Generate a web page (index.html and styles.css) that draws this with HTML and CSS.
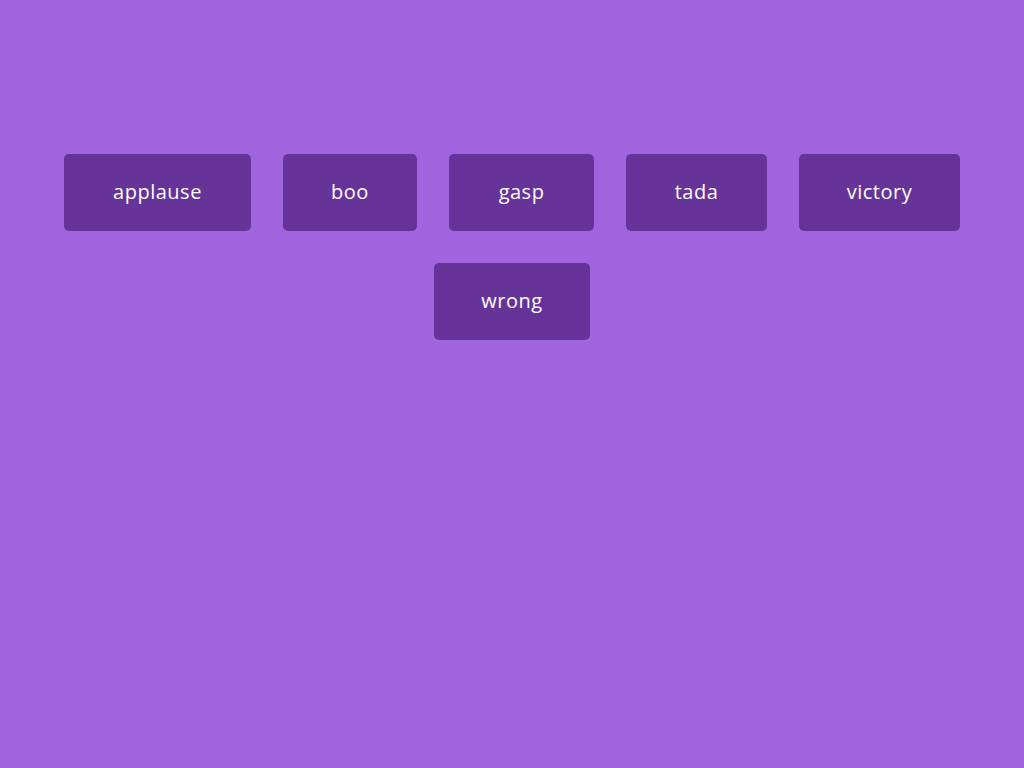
FILE: index.html
```html
<!DOCTYPE html>
<html lang="en">
<head>
<meta charset="UTF-8">
<title>Sound Board</title>
<link rel="stylesheet" href="styles.css">
</head>
<body>
<div class="board">
  <button class="btn btn-applause">applause</button>
  <button class="btn btn-boo">boo</button>
  <button class="btn btn-gasp">gasp</button>
  <button class="btn btn-tada">tada</button>
  <button class="btn btn-victory">victory</button>
  <button class="btn btn-wrong">wrong</button>
</div>
</body>
</html>
```
FILE: styles.css
```css
html, body {
  margin: 0;
  height: 100%;
}
body {
  background-color: #a164df;
  font-family: "Open Sans", "Inter", sans-serif;
  overflow: hidden;
}
.board {
  display: flex;
  flex-wrap: wrap;
  justify-content: center;
  gap: 32px;
  padding-top: 154px;
}
.btn {
  background-color: #663399;
  border: none;
  border-radius: 5px;
  color: #fff;
  height: 77px;
  padding: 0 0 2px;
  font-family: inherit;
  font-size: 20px;
  font-weight: 500;
  letter-spacing: 0.5px;
  text-align: center;
  cursor: pointer;
}
.btn-applause { width: 187px; }
.btn-boo { width: 134px; }
.btn-gasp { width: 145px; }
.btn-tada { width: 141px; }
.btn-victory { width: 161px; }
.btn-wrong { width: 156px; }
```
